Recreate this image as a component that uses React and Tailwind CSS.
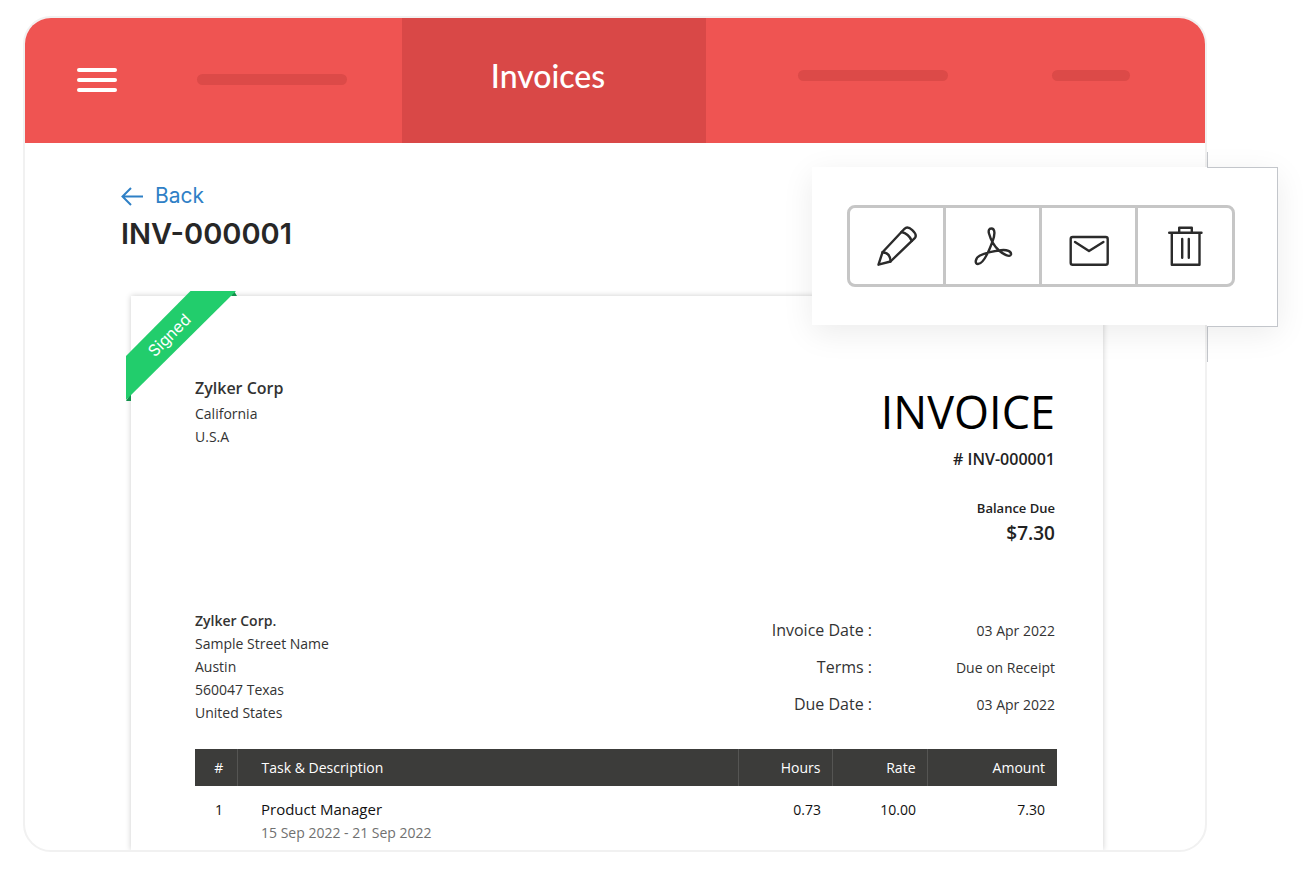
import React from "react";

const address = ["Sample Street Name", "Austin", "560047 Texas", "United States"];

const details = [
  { label: "Invoice Date :", value: "03 Apr 2022" },
  { label: "Terms :", value: "Due on Receipt" },
  { label: "Due Date :", value: "03 Apr 2022" },
];

const items = [
  { id: 1, task: "Product Manager", period: "15 Sep 2022 - 21 Sep 2022", hours: "0.73", rate: "10.00", amount: "7.30" },
];

const actions = [
  {
    label: "Edit",
    icon: (
      <>
        <path d="M5.5 42.7 9.5 30.3 31.5 6.8q3-3 7.8 1.3 5 4.6 2.7 7.7L17.5 39.5Z" />
        <path d="M9.5 30.3q8 .5 8 9.2M28.5 10q7 1.3 10.3 9" />
      </>
    ),
  },
  {
    label: "Download PDF",
    icon: (
      <path d="M22.2 6.5C26.500 6.500 26 13 23.500 19.500 20 29 14 42 9 42 5.500 42 6 36 11 33.500 17 30.500 25 29 32 28.200 38 27.500 42.500 29.500 42 32.500 41 36 34 32 30 28.500 25 24 21.500 17 20 11.500 19.200 8.500 20 6.500 22.200 6.500Z" />
    ),
  },
  {
    label: "Send mail",
    icon: (
      <>
        <rect x="5.7" y="15" width="37" height="27.7" rx="2" />
        <path d="m10 20 14 9 14.4-9" />
      </>
    ),
  },
  {
    label: "Delete",
    icon: (
      <path d="M8.2 10.7h32.3M10.8 10.7v32h27.7v-32M18.2 10.7v-5h12.6v5M21.2 17v18.7M27.8 17v18.7" />
    ),
  },
];

const Header = () => {
  return (
    <header className="grid h-[125px] grid-cols-[377fr_304fr_499fr] bg-[#ef5452]">
      <div className="flex items-center gap-20 pb-0.5 pl-[52px]">
        <button aria-label="Menu" className="flex w-10 shrink-0 flex-col gap-[6px]">
          <span className="h-1 w-full rounded-full bg-white" />
          <span className="h-1 w-full rounded-full bg-white" />
          <span className="h-1 w-full rounded-full bg-white" />
        </button>
        <span className="h-[11px] w-[150px] rounded-full bg-[#dc4a48]" />
      </div>
      <div className="flex items-center justify-center bg-[#d94847] pr-3 pb-[10px]">
        <a href="#invoices" className="font-[Lato,sans-serif] text-[32px] font-medium text-white">Invoices</a>
      </div>
      <div className="flex items-center gap-[104px] pb-[10px] pl-[92px]">
        <span className="h-[11px] w-[150px] rounded-full bg-[#dc4a48]" />
        <span className="h-[11px] w-[78px] rounded-full bg-[#dc4a48]" />
      </div>
    </header>
  );
};

const Ribbon = () => {
  return (
    <svg className="absolute -top-[6px] -left-[5px]" width="112" height="112" viewBox="0 0 112 112">
      <path d="M105 6h6l-3-5zM0 111h5v-8z" fill="#12904b" />
      <path d="M64.5 1H110L0 110V66Z" fill="#22cd6c" />
      <text
        x="43"
        y="51"
        textAnchor="middle"
        transform="rotate(-45 43 45)"
        fill="#fff"
        fontSize="16"
        fontFamily="Inter, sans-serif"
      >
        Signed
      </text>
    </svg>
  );
};

const ItemsTable = () => {
  return (
    <table className="mt-[25px] w-full table-fixed text-[14px] leading-[23px]">
      <thead>
        <tr className="h-[37px] bg-[#3c3c3a] text-white">
          <th className="w-[42px] border-r border-[#555553] pl-[6px] text-center font-medium">#</th>
          <th className="border-r border-[#555553] pl-6 text-left font-medium">Task &amp; Description</th>
          <th className="w-[94px] border-r border-[#555553] pr-[11px] text-right font-medium">Hours</th>
          <th className="w-[95px] border-r border-[#555553] pr-[11px] text-right font-medium">Rate</th>
          <th className="w-[130px] pr-3 text-right font-medium">Amount</th>
        </tr>
      </thead>
      <tbody>
        {items.map((item) => (
          <tr key={item.id} className="align-top font-medium text-[#111111]">
            <td className="pt-3 pl-[6px] text-center">{item.id}</td>
            <td className="pt-3 pb-[6px] pl-6">
              <p className="text-[15px]">{item.task}</p>
              <p className="font-normal text-[#707070]">{item.period}</p>
            </td>
            <td className="pt-3 pr-[11px] text-right">{item.hours}</td>
            <td className="pt-3 pr-[11px] text-right">{item.rate}</td>
            <td className="pt-3 pr-3 text-right">{item.amount}</td>
          </tr>
        ))}
      </tbody>
    </table>
  );
};

const InvoicePaper = () => {
  return (
    <section className="relative mt-10 mr-[102px] ml-[106px] bg-white pt-20 pr-[46px] pl-16 font-['Open_Sans',sans-serif] text-[14px] leading-[23px] text-[#333333] shadow-[0_0_6px_rgba(0,0,0,0.2)]">
      <Ribbon />
      <div className="flex justify-between pr-0.5">
        <div>
          <h2 className="mb-[2px] text-[16px] leading-6 font-semibold">Zylker Corp</h2>
          <p>California</p>
          <p>U.S.A</p>
        </div>
        <div className="text-right font-semibold text-[#222222]">
          <h2 className="text-[45px] leading-[72px] font-normal text-black">INVOICE</h2>
          <p className="text-[16px]"># INV-000001</p>
          <p className="mt-[25px] text-[13px] leading-6">Balance Due</p>
          <p className="text-[19px] leading-[26px]">$7.30</p>
        </div>
      </div>

      <div className="mt-[63px] flex justify-between pr-0.5">
        <address className="not-italic">
          <p className="font-semibold">Zylker Corp.</p>
          {address.map((line) => (
            <p key={line}>{line}</p>
          ))}
        </address>
        <dl className="flex flex-col gap-[14px] pt-[10px]">
          {details.map((row) => (
            <div key={row.label} className="flex text-right">
              <dt className="w-[104px] text-[16px]">{row.label}</dt>
              <dd className="w-[183px]">{row.value}</dd>
            </div>
          ))}
        </dl>
      </div>

      <ItemsTable />
    </section>
  );
};

const ActionBar = () => {
  return (
    <>
      <div className="absolute top-[136px] right-[-1px] h-[210px] w-px bg-[#c3c6cb]" />
      <div className="absolute top-[151px] -right-[71px] bg-white py-[38px] pr-[43px] pl-[35px] shadow-[0_8px_30px_rgba(0,0,0,0.08)]">
        <div className="absolute top-0 right-0 -bottom-0.5 w-[71px] border-y border-r border-[#c3c6cb] bg-white" />
        <div className="relative flex h-[82px] divide-x-3 divide-[#c6c6c6] rounded-lg border-3 border-[#c6c6c6] bg-white">
          {actions.map((action) => (
            <button key={action.label} aria-label={action.label} className="flex w-24 items-center justify-center last:w-[94px]">
              <svg
                width="48"
                height="48"
                viewBox="0 0 48 48"
                fill="none"
                stroke="#2b2b2b"
                strokeWidth="2.4"
                strokeLinecap="round"
                strokeLinejoin="round"
              >
                {action.icon}
              </svg>
            </button>
          ))}
        </div>
      </div>
    </>
  );
};

const App = () => {
  return (
    <div className="bg-white pt-4 pr-24 pb-[23px] pl-[23px]">
      <div className="relative">
        <main className="overflow-hidden rounded-[28px] border-2 border-[#f1f1f1] bg-white font-[Inter,sans-serif]">
          <Header />
          <div className="pt-[37px] pl-24">
            <a href="#back" className="inline-flex items-center gap-3 align-top text-[21px] leading-8 text-[#2f80c6]">
              <svg width="22" height="20" viewBox="0 0 22 20" fill="none" stroke="currentColor" strokeWidth="2">
                <path d="M22 10.5H1.5M10 2 1.5 10.5 10 19" />
              </svg>
              Back
            </a>
            <h1 className="text-[29px] leading-11 font-semibold text-[#272727]">INV-000001</h1>
          </div>
          <InvoicePaper />
        </main>
        <ActionBar />
      </div>
    </div>
  );
};

export default App;
